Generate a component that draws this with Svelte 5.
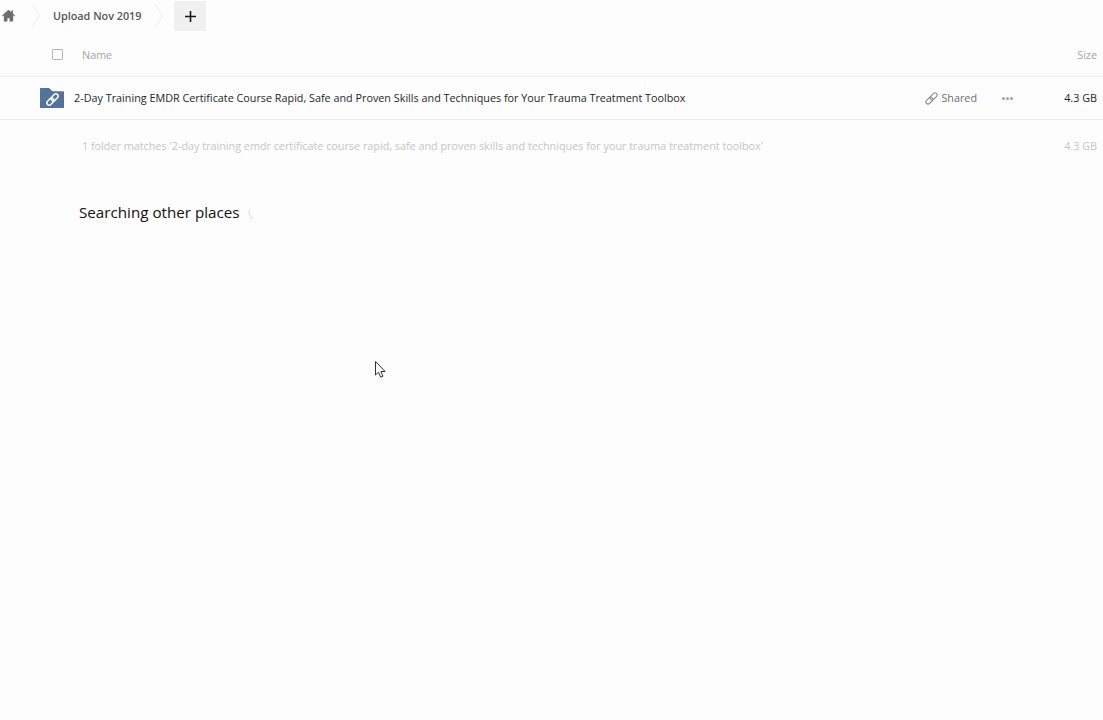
<script lang="ts">
  const folderName =
    "2-Day Training EMDR Certificate Course Rapid, Safe and Proven Skills and Techniques for Your Trauma Treatment Toolbox";
</script>

<div class="page">
  <nav class="breadcrumb">
    <span class="home">
      <svg width="13" height="13" viewBox="0 0 14 13">
        <path d="M7 .2 0 6.600l.5.9L2 6.300V13h3.800V9.500h2.400V13H12V6.300l1.500 1.200.5-.9-2.200-1.900V1.200H10v1.700z" fill="#6e6e6e" />
      </svg>
    </span>
    <svg class="crumb-sep first" width="10" height="32" viewBox="0 0 10 32">
      <path d="M1 3.500 8.500 15.500 1 27.500" fill="none" stroke="#ededed" />
    </svg>
    <span class="crumb">Upload Nov 2019</span>
    <svg class="crumb-sep second" width="10" height="32" viewBox="0 0 10 32">
      <path d="M1 3.500 8.500 15.500 1 27.500" fill="none" stroke="#ededed" />
    </svg>
    <button class="add" aria-label="New">
      <svg width="11" height="11" viewBox="0 0 11 11">
        <path d="M5.500 0v11M0 5.500h11" stroke="#1a1a1a" stroke-width="1.600" />
      </svg>
    </button>
  </nav>

  <div class="table-head">
    <span class="checkbox"></span>
    <span class="col-name">Name</span>
    <span class="col-size">Size</span>
  </div>

  <div class="file-row">
    <svg class="folder" width="24" height="20" viewBox="0 0 24 20">
      <path d="M0 .5Q0 0 .5 0H9l3.500 3.200H23.500q.5 0 .5.5V19.500q0 .5-.5.500H.5q-.5 0-.5-.5z" fill="#53739c" />
      <g fill="none" stroke="#fff" stroke-width="1.500" transform="rotate(-45 12.500 11.500)">
        <rect x="5.500" y="9.200" width="8" height="4.600" rx="2.300" />
        <rect x="11.500" y="9.200" width="8" height="4.600" rx="2.300" />
      </g>
    </svg>
    <span class="file-name">{folderName}</span>
    <span class="shared">
      <svg width="13" height="13" viewBox="0 0 13 13">
        <g fill="none" stroke="#8a8a8a" stroke-width="1.100" transform="rotate(-45 6.500 6.500)">
          <rect x="-.5" y="4.300" width="8" height="4.400" rx="2.200" />
          <rect x="5.500" y="4.300" width="8" height="4.400" rx="2.200" />
        </g>
      </svg>
      <span class="shared-label">Shared</span>
    </span>
    <span class="more"><i></i><i></i><i></i></span>
    <span class="file-size">4.3 GB</span>
  </div>

  <div class="summary">
    <span>1 folder matches '2-day training emdr certificate course rapid, safe and proven skills and techniques for your trauma treatment toolbox'</span>
    <span>4.3 GB</span>
  </div>

  <div class="searching">
    <h2>Searching other places</h2>
    <svg width="6" height="10" viewBox="0 0 6 10">
      <path d="M1.800.5Q.3 4 1.500 6.500 2.500 8.500 5 9" fill="none" stroke="#dcdcdc" />
    </svg>
  </div>

  <svg class="cursor" width="12" height="18" viewBox="0 0 12 18">
    <path d="M.5.500v13.500l3-2.800 2.200 5 2.300-1-2.200-4.700h4.300z" fill="#fff" stroke="#333" stroke-linejoin="round" />
  </svg>
</div>

<style>
  :global(body) {
    background: #fdfdfd;
  }

  .page {
    position: relative;
    width: 1103px;
    height: 720px;
    overflow: hidden;
    font-family: "Open Sans", sans-serif;
    font-size: 10.8px;
    color: #1f1f1f;
    background: #fdfdfd;
  }

  .breadcrumb {
    display: flex;
    align-items: center;
    height: 32px;
  }

  .home {
    display: flex;
    margin: 0 0 2px 2px;
  }

  .crumb-sep.first {
    margin-left: 16px;
  }

  .crumb {
    margin: 0 0 2px 12px;
    font-weight: 600;
    color: #555;
  }

  .crumb-sep.second {
    margin-left: 13px;
  }

  .add {
    display: flex;
    align-items: center;
    justify-content: center;
    width: 32px;
    height: 30px;
    margin-left: 10px;
    padding: 0;
    border: none;
    border-radius: 2px;
    background: #f0f0f0;
  }

  .table-head {
    display: flex;
    align-items: center;
    height: 44px;
    border-bottom: 1px solid #ededed;
    color: #a6a6a6;
  }

  .checkbox {
    width: 9px;
    height: 9px;
    margin: 1px 0 0 52px;
    border: 1px solid #b4b4b4;
    border-radius: 1px;
  }

  .col-name {
    margin-left: 19px;
  }

  .col-size {
    margin-left: auto;
    margin-right: 6px;
  }

  .file-row {
    display: flex;
    align-items: center;
    height: 42px;
    border-bottom: 1px solid #ededed;
  }

  .folder {
    margin-left: 40px;
  }

  .file-name {
    margin: 0 0 2px 10px;
  }

  .shared {
    display: flex;
    align-items: center;
    gap: 3px;
    margin-left: auto;
    color: #6e6e6e;
  }

  .shared-label {
    margin-bottom: 2px;
  }

  .more {
    display: flex;
    gap: 1px;
    margin-left: 25px;
  }

  .more i {
    width: 3px;
    height: 3px;
    border-radius: 50%;
    background: #a3a3a3;
  }

  .file-size {
    width: 84px;
    margin: 0 6px 2px 0;
    text-align: right;
  }

  .summary {
    display: flex;
    justify-content: space-between;
    padding: 18px 6px 0 82px;
    color: #c6c6c6;
  }

  .searching {
    display: flex;
    align-items: center;
    gap: 8px;
    margin: 49px 0 0 79px;
  }

  .searching h2 {
    margin: 0;
    font-size: 15.2px;
    font-weight: 400;
    color: #111;
  }

  .searching svg {
    margin-top: 4px;
  }

  .cursor {
    position: absolute;
    left: 375px;
    top: 361px;
  }
</style>
